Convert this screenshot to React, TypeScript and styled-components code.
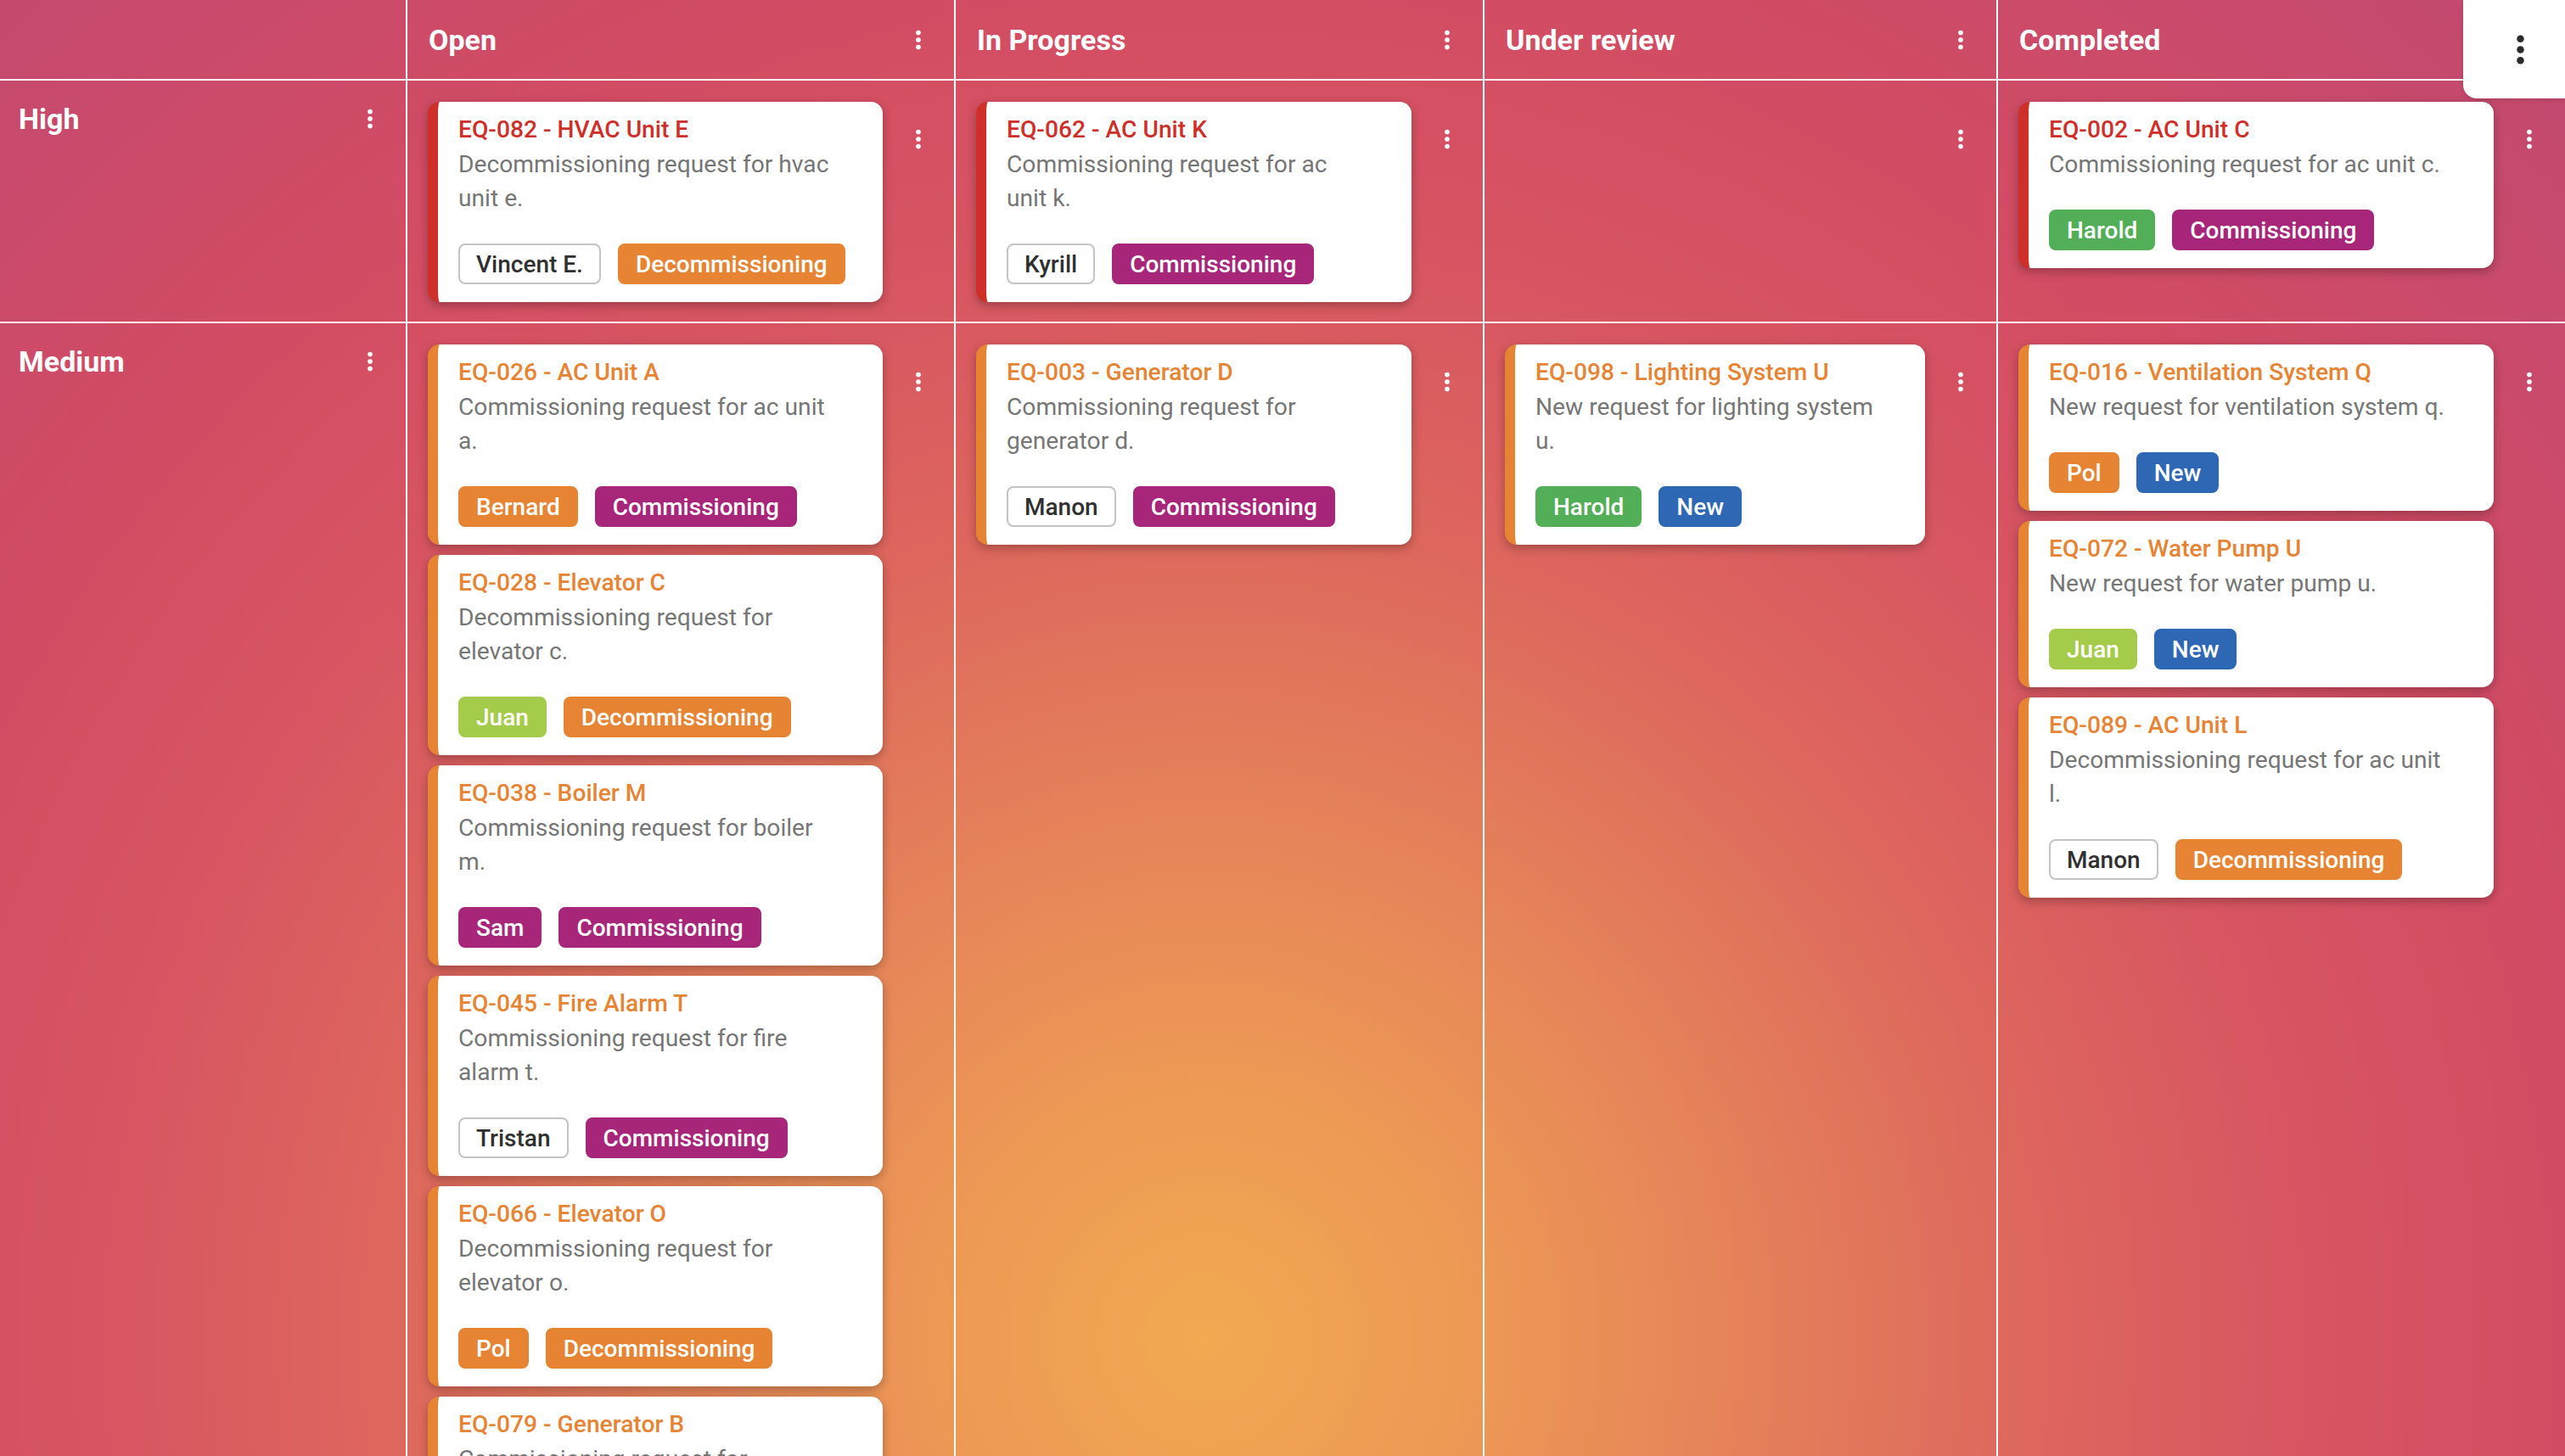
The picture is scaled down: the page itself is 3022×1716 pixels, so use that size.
import React from 'react';
import styled, { createGlobalStyle } from 'styled-components';

const GlobalStyle = createGlobalStyle`
  html, body {
    margin: 0;
    padding: 0;
    height: 100%;
  }
  body {
    font-family: Roboto, "Noto Sans", sans-serif;
    overflow: hidden;
  }
`;

type ChipKind = 'outlined' | 'orange' | 'magenta' | 'green' | 'lime' | 'blue';
type Priority = 'high' | 'medium';

interface Ticket {
  code: string;
  name: string;
  description: string;
  assignee: { label: string; kind: ChipKind };
  type: { label: string; kind: ChipKind };
}

const chipColors: Record<ChipKind, { bg: string; fg: string; border: string }> = {
  outlined: { bg: '#ffffff', fg: '#303030', border: '#c4c4c4' },
  orange: { bg: '#e68433', fg: '#ffffff', border: '#e68433' },
  magenta: { bg: '#a8267a', fg: '#ffffff', border: '#a8267a' },
  green: { bg: '#52ae57', fg: '#ffffff', border: '#52ae57' },
  lime: { bg: '#a5cb4a', fg: '#ffffff', border: '#a5cb4a' },
  blue: { bg: '#2e68b4', fg: '#ffffff', border: '#2e68b4' },
};

const priorityColors: Record<Priority, string> = {
  high: '#cf2f29',
  medium: '#e68433',
};

const statuses = ['Open', 'In Progress', 'Under review', 'Completed'];

const COMM = { label: 'Commissioning', kind: 'magenta' as ChipKind };
const DECOMM = { label: 'Decommissioning', kind: 'orange' as ChipKind };
const NEW = { label: 'New', kind: 'blue' as ChipKind };

const rows: { key: Priority; label: string; cells: Ticket[][] }[] = [
  {
    key: 'high',
    label: 'High',
    cells: [
      [
        {
          code: 'EQ-082',
          name: 'HVAC Unit E',
          description: 'Decommissioning request for hvac unit e.',
          assignee: { label: 'Vincent E.', kind: 'outlined' },
          type: DECOMM,
        },
      ],
      [
        {
          code: 'EQ-062',
          name: 'AC Unit K',
          description: 'Commissioning request for ac unit k.',
          assignee: { label: 'Kyrill', kind: 'outlined' },
          type: COMM,
        },
      ],
      [],
      [
        {
          code: 'EQ-002',
          name: 'AC Unit C',
          description: 'Commissioning request for ac unit c.',
          assignee: { label: 'Harold', kind: 'green' },
          type: COMM,
        },
      ],
    ],
  },
  {
    key: 'medium',
    label: 'Medium',
    cells: [
      [
        {
          code: 'EQ-026',
          name: 'AC Unit A',
          description: 'Commissioning request for ac unit a.',
          assignee: { label: 'Bernard', kind: 'orange' },
          type: COMM,
        },
        {
          code: 'EQ-028',
          name: 'Elevator C',
          description: 'Decommissioning request for elevator c.',
          assignee: { label: 'Juan', kind: 'lime' },
          type: DECOMM,
        },
        {
          code: 'EQ-038',
          name: 'Boiler M',
          description: 'Commissioning request for boiler m.',
          assignee: { label: 'Sam', kind: 'magenta' },
          type: COMM,
        },
        {
          code: 'EQ-045',
          name: 'Fire Alarm T',
          description: 'Commissioning request for fire alarm t.',
          assignee: { label: 'Tristan', kind: 'outlined' },
          type: COMM,
        },
        {
          code: 'EQ-066',
          name: 'Elevator O',
          description: 'Decommissioning request for elevator o.',
          assignee: { label: 'Pol', kind: 'orange' },
          type: DECOMM,
        },
        {
          code: 'EQ-079',
          name: 'Generator B',
          description: 'Commissioning request for generator b.',
          assignee: { label: 'Sam', kind: 'magenta' },
          type: COMM,
        },
      ],
      [
        {
          code: 'EQ-003',
          name: 'Generator D',
          description: 'Commissioning request for generator d.',
          assignee: { label: 'Manon', kind: 'outlined' },
          type: COMM,
        },
      ],
      [
        {
          code: 'EQ-098',
          name: 'Lighting System U',
          description: 'New request for lighting system u.',
          assignee: { label: 'Harold', kind: 'green' },
          type: NEW,
        },
      ],
      [
        {
          code: 'EQ-016',
          name: 'Ventilation System Q',
          description: 'New request for ventilation system q.',
          assignee: { label: 'Pol', kind: 'orange' },
          type: NEW,
        },
        {
          code: 'EQ-072',
          name: 'Water Pump U',
          description: 'New request for water pump u.',
          assignee: { label: 'Juan', kind: 'lime' },
          type: NEW,
        },
        {
          code: 'EQ-089',
          name: 'AC Unit L',
          description: 'Decommissioning request for ac unit l.',
          assignee: { label: 'Manon', kind: 'outlined' },
          type: DECOMM,
        },
      ],
    ],
  },
];

const Page = styled.div`
  position: relative;
  height: 100vh;
  overflow: hidden;
  background: radial-gradient(
    circle at 47% 92%,
    #f2a951 0%,
    #ed9955 14%,
    #e5825a 28%,
    #dd675d 43%,
    #d75562 58%,
    #d24c63 72%,
    #c84a6c 88%,
    #c0496f 100%
  );
`;

const Board = styled.div`
  display: grid;
  grid-template-columns: 480px 646px 623px 605px 1fr;
  grid-template-rows: 95px auto 1fr;
  min-height: 100%;
`;

const GridCell = styled.div<{ $last?: boolean; $bottom?: boolean }>`
  box-sizing: border-box;
  border-right: ${({ $last }) => ($last ? 'none' : '2px solid #ffffff')};
  border-bottom: ${({ $bottom }) => ($bottom ? '2px solid #ffffff' : 'none')};
  min-width: 0;
`;

const HeaderCell = styled(GridCell)`
  display: flex;
  align-items: center;
  justify-content: space-between;
  padding-left: 25px;
`;

const HeaderTitle = styled.span`
  color: #ffffff;
  font-size: 34px;
  font-weight: 700;
`;

const LabelCell = styled(GridCell)`
  padding: 3px 0 0 22px;
`;

const LabelBar = styled.div`
  display: flex;
  align-items: center;
  justify-content: space-between;
  height: 84px;
`;

const LabelText = styled.span`
  color: #ffffff;
  font-size: 34px;
  font-weight: 700;
`;

const BodyCell = styled(GridCell)`
  display: flex;
  align-items: flex-start;
  padding: 25px 0 23px 24px;
`;

const CardStack = styled.div`
  flex: 1;
  display: flex;
  flex-direction: column;
  gap: 12px;
  min-width: 0;
`;

const KebabButton = styled.button<{ $offset?: number }>`
  flex: none;
  width: 84px;
  height: 84px;
  margin-top: ${({ $offset }) => $offset ?? 0}px;
  display: flex;
  align-items: center;
  justify-content: center;
  background: transparent;
  border: none;
  padding: 0;
  color: #ffffff;
  cursor: pointer;
`;

const Card = styled.div<{ $accent: string }>`
  box-sizing: border-box;
  background: #ffffff;
  border-radius: 14px;
  border-left: 12px solid ${({ $accent }) => $accent};
  padding: 12px 50px 21px 24px;
  box-shadow: 0 4px 12px rgba(0, 0, 0, 0.28);
`;

const CardTitle = styled.div<{ $accent: string }>`
  color: ${({ $accent }) => $accent};
  font-size: 28.2px;
  font-weight: 500;
  line-height: 42px;
`;

const CardDescription = styled.p`
  margin: 0;
  color: #767676;
  font-size: 28.2px;
  line-height: 40px;
`;

const ChipRow = styled.div`
  display: flex;
  gap: 20px;
  margin-top: 33px;
`;

const Chip = styled.span<{ $kind: ChipKind }>`
  box-sizing: border-box;
  display: inline-flex;
  align-items: center;
  height: 48px;
  padding: 0 19px;
  border-radius: 8px;
  border: 2px solid ${({ $kind }) => chipColors[$kind].border};
  background: ${({ $kind }) => chipColors[$kind].bg};
  color: ${({ $kind }) => chipColors[$kind].fg};
  font-size: 28px;
  font-weight: 500;
  white-space: nowrap;
`;

const CornerMenu = styled.div`
  position: absolute;
  top: 0;
  right: 0;
  width: 120px;
  height: 116px;
  box-sizing: border-box;
  padding-left: 14px;
  display: flex;
  align-items: center;
  justify-content: center;
  background: #ffffff;
  border-bottom-left-radius: 16px;
  color: #2b2b2b;
  box-shadow: 0 2px 6px rgba(0, 0, 0, 0.12);
`;

const MoreVert: React.FC<{ size?: number }> = ({ size = 34 }) => (
  <svg width={size} height={size} viewBox="0 0 24 24" fill="currentColor">
    <circle cx="12" cy="6" r="2" />
    <circle cx="12" cy="12" r="2" />
    <circle cx="12" cy="18" r="2" />
  </svg>
);

const TicketCard: React.FC<{ ticket: Ticket; accent: string }> = ({ ticket, accent }) => (
  <Card $accent={accent}>
    <CardTitle $accent={accent}>
      {ticket.code} - {ticket.name}
    </CardTitle>
    <CardDescription>{ticket.description}</CardDescription>
    <ChipRow>
      <Chip $kind={ticket.assignee.kind}>{ticket.assignee.label}</Chip>
      <Chip $kind={ticket.type.kind}>{ticket.type.label}</Chip>
    </ChipRow>
  </Card>
);

const App: React.FC = () => {
  return (
    <Page>
      <GlobalStyle />
      <Board>
        <GridCell $bottom />
        {statuses.map((status, i) => (
          <HeaderCell key={status} $bottom $last={i === statuses.length - 1}>
            <HeaderTitle>{status}</HeaderTitle>
            <KebabButton>
              <MoreVert />
            </KebabButton>
          </HeaderCell>
        ))}

        {rows.map((row, r) => {
          const isLastRow = r === rows.length - 1;
          return (
            <React.Fragment key={row.key}>
              <LabelCell $bottom={!isLastRow}>
                <LabelBar>
                  <LabelText>{row.label}</LabelText>
                  <KebabButton>
                    <MoreVert />
                  </KebabButton>
                </LabelBar>
              </LabelCell>
              {row.cells.map((tickets, c) => (
                <BodyCell
                  key={`${row.key}-${c}`}
                  $bottom={!isLastRow}
                  $last={c === row.cells.length - 1}
                >
                  <CardStack>
                    {tickets.map((t) => (
                      <TicketCard key={t.code} ticket={t} accent={priorityColors[row.key]} />
                    ))}
                  </CardStack>
                  <KebabButton $offset={2}>
                    <MoreVert />
                  </KebabButton>
                </BodyCell>
              ))}
            </React.Fragment>
          );
        })}
      </Board>
      <CornerMenu>
        <MoreVert size={51} />
      </CornerMenu>
    </Page>
  );
};

export default App;
